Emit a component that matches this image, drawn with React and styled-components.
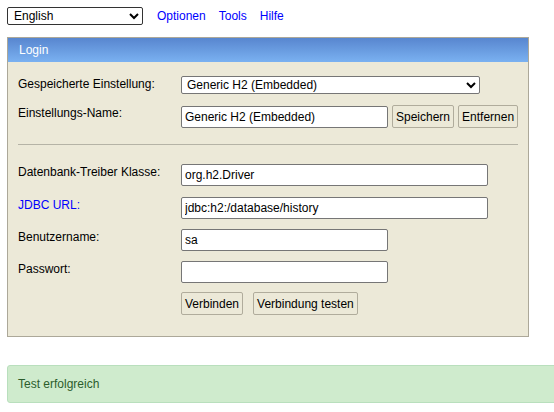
import React from "react";
import styled, { createGlobalStyle } from "styled-components";

const Global = createGlobalStyle`
  html, body { margin: 0; padding: 0; background: #ffffff; overflow: hidden; }
  body { font-family: "Liberation Sans", Arial, sans-serif; font-size: 12px; color: #000; }
`;

const Page = styled.div`
  padding: 7px 0 0 7px;
  width: 560px;
`;

const TopBar = styled.div`
  display: flex;
  align-items: center;
  height: 18px;
`;

const LangSelect = styled.select`
  width: 136px;
  height: 18px;
  font: 12px "Liberation Sans", Arial, sans-serif;
  border: 1px solid #333;
  border-radius: 2px;
  background: #fff;
  padding: 0 2px;
  margin: 0 14px 0 0;
  color: #000;
`;

const TopLink = styled.a`
  color: #0000ff;
  text-decoration: none;
  font-size: 12px;
  margin-right: 13px;
  cursor: pointer;
`;

const Panel = styled.div`
  margin-top: 12px;
  width: 520px;
  border: 1px solid #aca899;
  background: #ece9d8;
`;

const PanelHead = styled.div`
  height: 24px;
  line-height: 24px;
  padding-left: 11px;
  color: #fff;
  font-size: 12px;
  background: linear-gradient(#5886cf, #7ab1f1);
`;

const PanelBody = styled.div`
  padding: 14px 10px 21px 10px;
  display: flex;
  flex-direction: column;
`;

const Row = styled.div`
  display: flex;
  align-items: flex-start;
  margin-top: ${(p) => p.$gap ?? 0}px;
`;

const Label = styled.div`
  width: 163px;
  flex: none;
  padding-top: ${(p) => p.$pt ?? 1}px;
  color: ${(p) => (p.$link ? "#0000ff" : "#000")};
  cursor: ${(p) => (p.$link ? "pointer" : "default")};
`;

const Controls = styled.div`
  display: flex;
  gap: ${(p) => p.$gap ?? 4}px;
  align-items: center;
`;

const Select = styled.select`
  width: ${(p) => p.$w}px;
  height: 18px;
  font: 12px "Liberation Sans", Arial, sans-serif;
  border: 1px solid #767676;
  border-radius: 2px;
  background: #fff;
  padding: 0 1px;
  margin: 0;
  color: #000;
`;

const Input = styled.input`
  width: ${(p) => p.$w}px;
  height: 22px;
  box-sizing: border-box;
  font: 12px "Liberation Sans", Arial, sans-serif;
  border: 1px solid #767676;
  border-radius: 2px;
  background: #fff;
  padding: 1px 3px;
  margin: 0;
  color: #000;
  outline: none;
`;

const Button = styled.button`
  height: 23px;
  box-sizing: border-box;
  font: 12px "Liberation Sans", Arial, sans-serif;
  border: 1px solid #b0ac9c;
  border-radius: 2px;
  background: #ece9d8;
  padding: 0 3px;
  margin: 0;
  color: #000;
  cursor: pointer;
`;

const Divider = styled.hr`
  border: none;
  border-top: 1px solid #b5b3a6;
  margin: 16px 0 19px 0;
  height: 0;
`;

const Success = styled.div`
  margin-top: 28px;
  width: 560px;
  height: 38px;
  box-sizing: border-box;
  border: 1px solid #b9dfbd;
  border-radius: 3px;
  background: #cfebcd;
  color: #2c5d2c;
  padding-left: 10px;
  display: flex;
  align-items: center;
`;

export default function App() {
  return (
    <Page>
      <Global />
      <TopBar>
        <LangSelect defaultValue="en">
          <option value="en">English</option>
        </LangSelect>
        <TopLink>Optionen</TopLink>
        <TopLink>Tools</TopLink>
        <TopLink>Hilfe</TopLink>
      </TopBar>
      <Panel>
        <PanelHead>Login</PanelHead>
        <PanelBody>
          <Row>
            <Label $pt={1}>Gespeicherte Einstellung:</Label>
            <Controls>
              <Select $w={299} defaultValue="h2">
                <option value="h2">Generic H2 (Embedded)</option>
              </Select>
            </Controls>
          </Row>
          <Row $gap={11}>
            <Label>Einstellungs-Name:</Label>
            <Controls>
              <Input $w={207} defaultValue="Generic H2 (Embedded)" />
              <Button>Speichern</Button>
              <Button>Entfernen</Button>
            </Controls>
          </Row>
          <Divider />
          <Row>
            <Label>Datenbank-Treiber Klasse:</Label>
            <Controls>
              <Input $w={307} defaultValue="org.h2.Driver" />
            </Controls>
          </Row>
          <Row $gap={11}>
            <Label $link>JDBC URL:</Label>
            <Controls>
              <Input $w={307} defaultValue="jdbc:h2:/database/history" />
            </Controls>
          </Row>
          <Row $gap={10}>
            <Label>Benutzername:</Label>
            <Controls>
              <Input $w={207} defaultValue="sa" />
            </Controls>
          </Row>
          <Row $gap={10}>
            <Label>Passwort:</Label>
            <Controls>
              <Input $w={207} type="password" defaultValue="" />
            </Controls>
          </Row>
          <Row $gap={9}>
            <Label />
            <Controls $gap={10}>
              <Button>Verbinden</Button>
              <Button>Verbindung testen</Button>
            </Controls>
          </Row>
        </PanelBody>
      </Panel>
      <Success>Test erfolgreich</Success>
    </Page>
  );
}
